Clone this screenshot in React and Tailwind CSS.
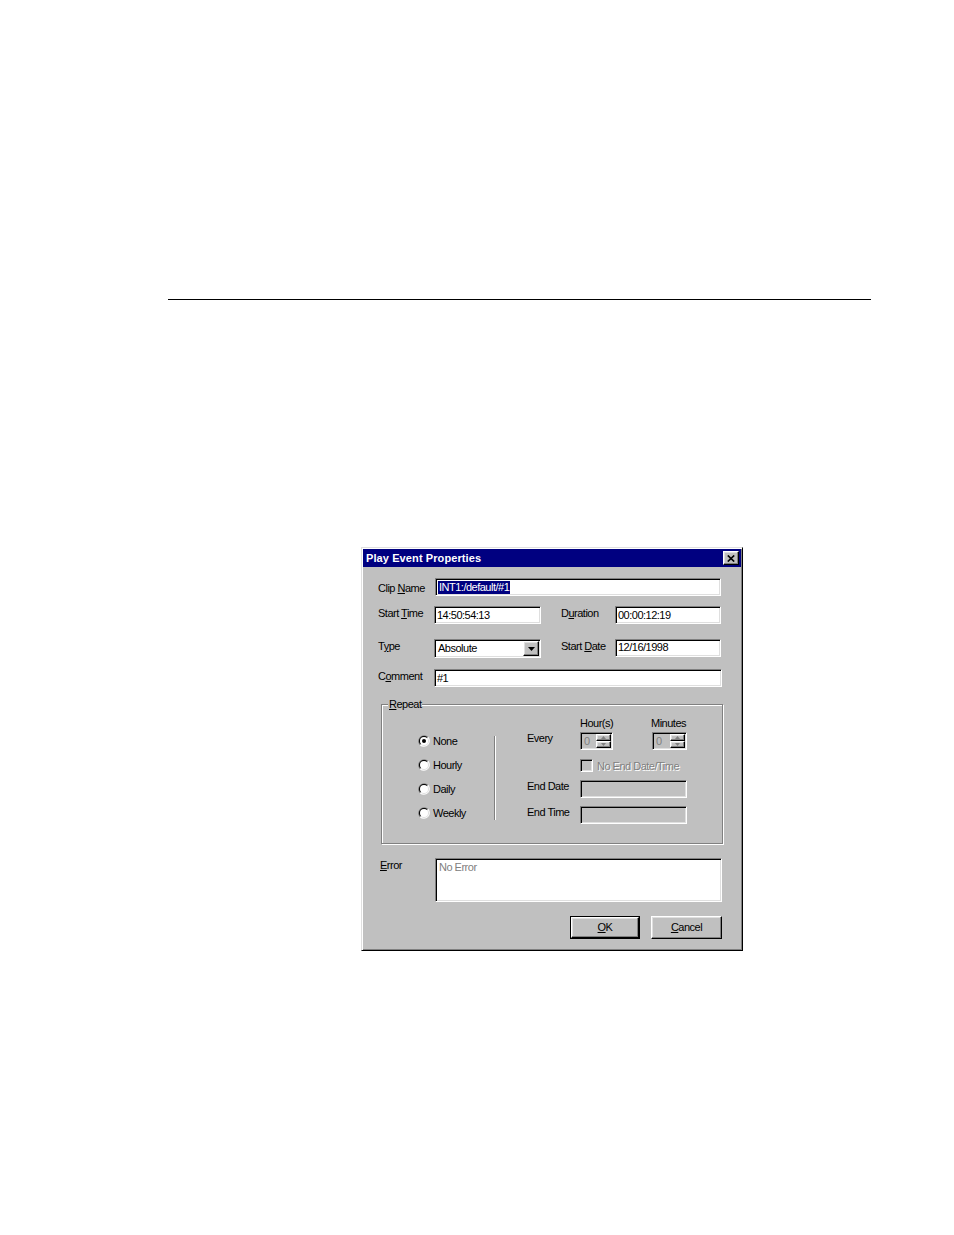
import React from "react";

const SUNKEN_W =
  "border border-t-[#808080] border-l-[#808080] border-r-white border-b-white shadow-[inset_1px_1px_#000,inset_-1px_-1px_#dfdfdf] bg-white";
const SUNKEN_G =
  "border border-t-[#808080] border-l-[#808080] border-r-white border-b-white shadow-[inset_1px_1px_#000,inset_-1px_-1px_#dfdfdf] bg-[#c0c0c0]";
const RAISED =
  "border border-t-white border-l-white border-r-black border-b-black shadow-[inset_-1px_-1px_#808080,inset_1px_1px_#dfdfdf] bg-[#c0c0c0]";

function U({ children }) {
  return <span className="underline underline-offset-[1px] decoration-1">{children}</span>;
}

function Field({ w, children, grey }) {
  return (
    <div className={`${grey ? SUNKEN_G : SUNKEN_W} ${w} h-[18px] flex items-center pl-[2px] overflow-hidden whitespace-nowrap`}>
      {children}
    </div>
  );
}

function Radio({ checked }) {
  return (
    <svg width="12" height="12" viewBox="0 0 12 12" className="shrink-0">
      <path d="M1.76 10.24A6 6 0 0 1 10.24 1.76Z" fill="#808080" />
      <path d="M10.24 1.76A6 6 0 0 1 1.76 10.24Z" fill="#ffffff" />
      <path d="M2.46 9.54A5 5 0 0 1 9.54 2.46Z" fill="#000000" />
      <path d="M9.54 2.46A5 5 0 0 1 2.46 9.54Z" fill="#dfdfdf" />
      <circle cx="6" cy="6" r="4" fill="#ffffff" />
      {checked && <circle cx="6" cy="6" r="2" fill="#000000" />}
    </svg>
  );
}

function Arrow({ up }) {
  return (
    <svg width="5" height="3" viewBox="0 0 5 3">
      <path d={up ? "M2.5 0L5 3H0Z" : "M0 0H5L2.5 3Z"} fill="#808080" />
    </svg>
  );
}

function Spinner({ w }) {
  return (
    <div className={`${SUNKEN_G} ${w} h-[18px] flex p-px`}>
      <span className="pl-[2px] leading-[14px] text-[#808080]">0</span>
      <div className="ml-auto flex flex-col">
        <div className={`${RAISED} w-[15px] h-[7px] flex items-center justify-center`}>
          <Arrow up />
        </div>
        <div className={`${RAISED} w-[15px] h-[7px] flex items-center justify-center`}>
          <Arrow />
        </div>
      </div>
    </div>
  );
}

function Label({ w, children, extra = "" }) {
  return <div className={`${w} shrink-0 leading-[12px] whitespace-nowrap ${extra}`}>{children}</div>;
}

export default function App() {
  return (
    <div className="w-[954px] h-[1235px] bg-white overflow-hidden font-['Liberation_Sans',Arial,Helvetica,sans-serif] text-[11px] tracking-[-0.5px] text-black">
      <div className="pt-[299px]">
        <div className="ml-[168px] w-[703px] h-px bg-black" />
      </div>

      <div className="mt-[247px] ml-[361px] w-[382px] h-[404px] bg-[#c0c0c0] border border-t-[#dfdfdf] border-l-[#dfdfdf] border-r-black border-b-black shadow-[inset_1px_1px_#ffffff,inset_-1px_-1px_#808080] p-px">
        {/* Title bar */}
        <div className="h-[18px] bg-[#000080] flex items-center pl-[3px] pr-[2px]">
          <span className="text-white font-bold tracking-[0.1px] leading-[12px]">Play Event Properties</span>
          <div className={`${RAISED} ml-auto w-[16px] h-[14px] flex items-center justify-center`}>
            <svg width="8" height="7" viewBox="0 0 8 7">
              <path d="M0.8 0.5L7.2 6.5M7.2 0.5L0.8 6.5" stroke="#000" strokeWidth="1.7" />
            </svg>
          </div>
        </div>

        {/* Content */}
        <div className="pl-[15px]">
          {/* Clip Name */}
          <div className="mt-[11px] flex items-center h-[18px]">
            <Label w="w-[57px]" extra="pt-[1px]">
              Clip <U>N</U>ame
            </Label>
            <Field w="w-[286px]">
              <span className="bg-[#000080] text-white leading-[13px] px-px">INT1:/default/#1</span>
            </Field>
          </div>

          {/* Start Time / Duration */}
          <div className="mt-[10px] flex items-center h-[18px]">
            <Label w="w-[56px]" extra="-mt-[5px]">
              Start <U>T</U>ime
            </Label>
            <Field w="w-[107px]">14:50:54:13</Field>
            <Label w="w-[54px]" extra="ml-[20px] -mt-[5px]">
              D<U>u</U>ration
            </Label>
            <Field w="w-[106px]">00:00:12:19</Field>
          </div>

          {/* Type / Start Date */}
          <div className="mt-[14px] flex items-center h-[19px]">
            <Label w="w-[56px]" extra="-mt-[3px]">
              T<U>y</U>pe
            </Label>
            <div className={`${SUNKEN_W} w-[107px] h-[19px] flex items-center p-[2px] mt-[2px]`}>
              <span className="pl-px">Absolute</span>
              <div className={`${RAISED} ml-auto w-[16px] h-[15px] -mr-px flex items-center justify-center`}>
                <svg width="7" height="4" viewBox="0 0 7 4">
                  <path d="M0 0H7L3.5 4Z" fill="#000" />
                </svg>
              </div>
            </div>
            <Label w="w-[54px]" extra="ml-[20px] -mt-[3px]">
              Start <U>D</U>ate
            </Label>
            <Field w="w-[106px]">12/16/1998</Field>
          </div>

          {/* Comment */}
          <div className="mt-[12px] flex items-center h-[18px]">
            <Label w="w-[56px]" extra="-mt-[5px]">
              C<U>o</U>mment
            </Label>
            <Field w="w-[288px]">#1</Field>
          </div>

          {/* Repeat group */}
          <div className="relative mt-[17px] ml-[3px] w-[342px] h-[140px] border border-[#808080] shadow-[inset_1px_1px_#ffffff,1px_1px_#ffffff]">
            <span className="absolute left-[6px] -top-[7px] px-px bg-[#c0c0c0] leading-[12px]">
              <U>R</U>epeat
            </span>
            <div className="flex items-start">
              <div className="ml-[36px] mt-[29px] w-[76px] flex flex-col gap-[11px]">
                {["None", "Hourly", "Daily", "Weekly"].map((t, i) => (
                  <div key={t} className="h-[13px] flex items-center">
                    <Radio checked={i === 0} />
                    <span className="ml-[3px] leading-[12px]">{t}</span>
                  </div>
                ))}
              </div>
              <div className="mt-[31px] h-[84px] w-0 border-l border-r border-l-[#808080] border-r-white" />
              <div className="ml-[31px] mt-[12px] flex flex-col">
                <div className="flex h-[12px] leading-[12px]">
                  <div className="w-[53px]" />
                  <div className="w-[71px]">Hour(s)</div>
                  <div>Minutes</div>
                </div>
                <div className="mt-[3px] flex items-start">
                  <Label w="w-[53px]">Every</Label>
                  <Spinner w="w-[33px]" />
                  <div className="ml-[39px]">
                    <Spinner w="w-[35px]" />
                  </div>
                </div>
                <div className="mt-[9px] flex items-center h-[13px]">
                  <div className="w-[53px]" />
                  <div className={`${SUNKEN_G} w-[13px] h-[13px]`} />
                  <span className="ml-[4px] text-[#808080] [text-shadow:1px_1px_#ffffff] leading-[12px]">
                    No End Date/Time
                  </span>
                </div>
                <div className="mt-[8px] flex items-start">
                  <Label w="w-[53px]">End Date</Label>
                  <div className={`${SUNKEN_G} w-[107px] h-[18px]`} />
                </div>
                <div className="mt-[8px] flex items-start">
                  <Label w="w-[53px]">End Time</Label>
                  <div className={`${SUNKEN_G} w-[107px] h-[18px]`} />
                </div>
              </div>
            </div>
          </div>

          {/* Error */}
          <div className="mt-[14px] flex items-start">
            <Label w="w-[57px]" extra="pl-[2px] pt-px">
              <U>E</U>rror
            </Label>
            <div className={`${SUNKEN_W} w-[287px] h-[44px] pl-[3px] pt-[2px] leading-[12px] text-[#808080]`}>
              No Error
            </div>
          </div>

          {/* Buttons */}
          <div className="mt-[14px] flex">
            <div className="ml-[192px] w-[70px] h-[23px] border border-black">
              <div className={`${RAISED} w-full h-full flex items-center justify-center`}>
                <span>
                  <U>O</U>K
                </span>
              </div>
            </div>
            <div className={`${RAISED} ml-[11px] w-[71px] h-[23px] flex items-center justify-center`}>
              <span>
                <U>C</U>ancel
              </span>
            </div>
          </div>
        </div>
      </div>
    </div>
  );
}
